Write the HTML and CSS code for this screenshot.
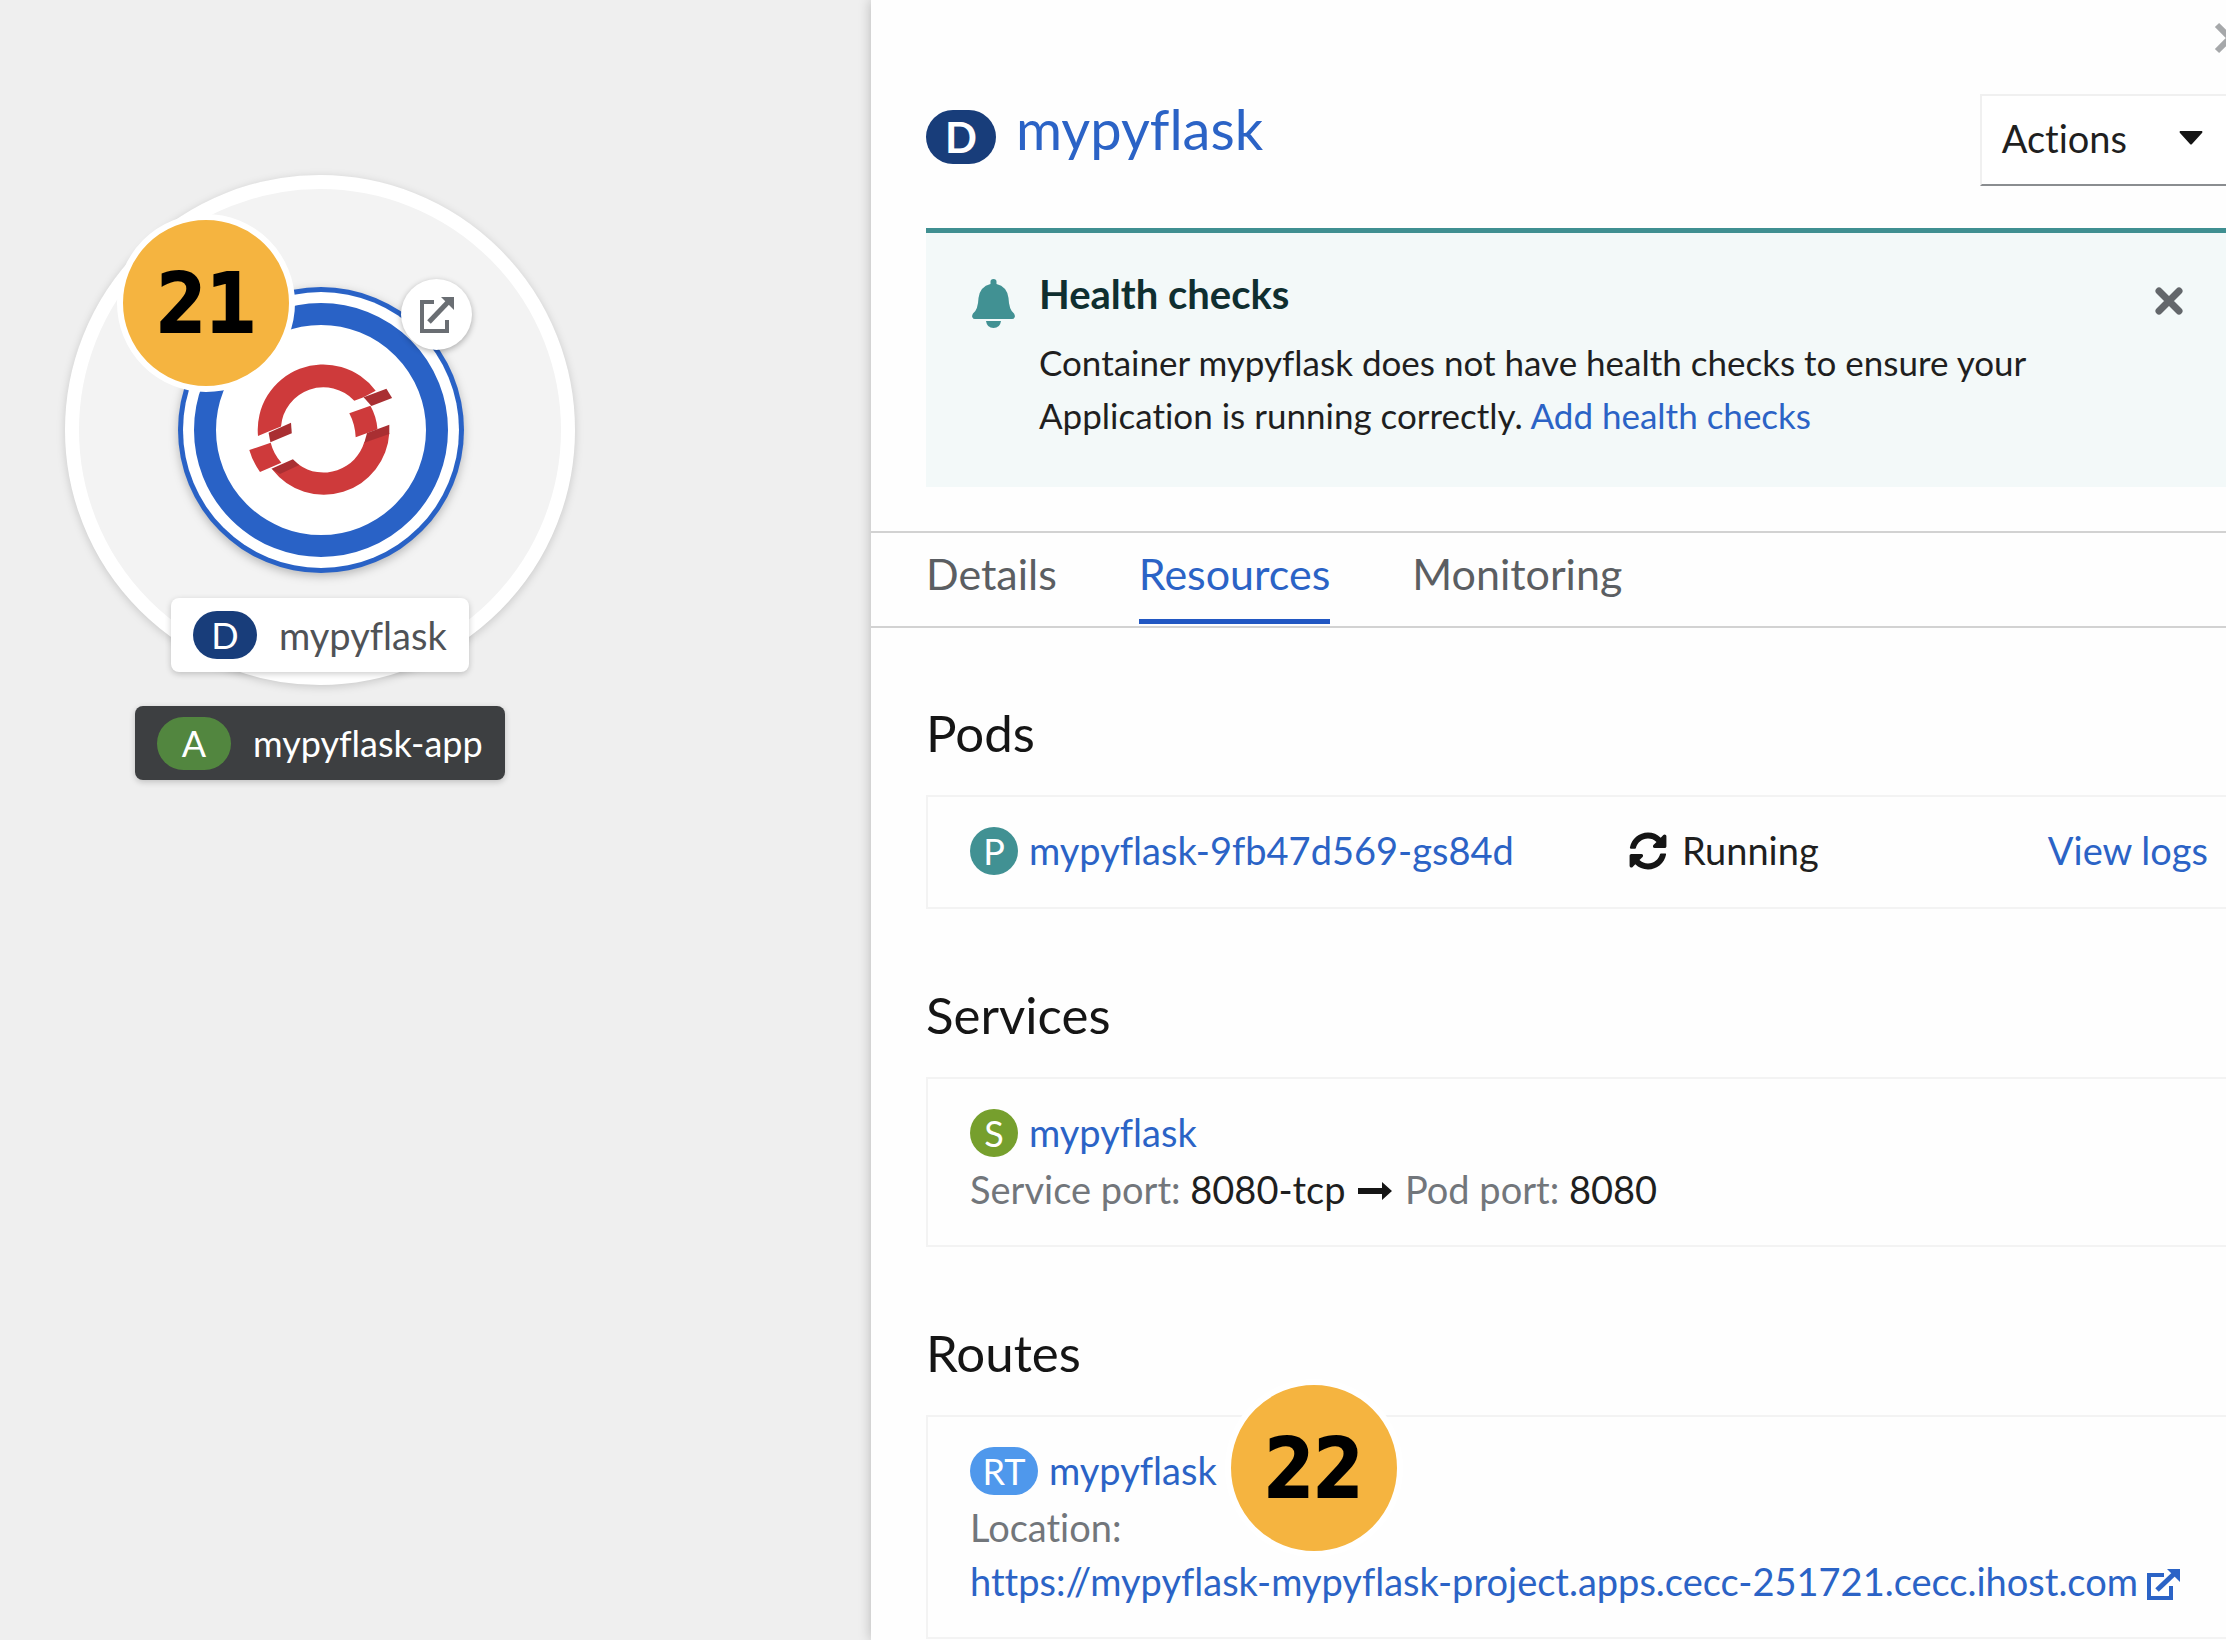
FILE: index.html
```html
<!DOCTYPE html>
<html lang="en">
<head>
<meta charset="utf-8">
<title>Topology - mypyflask</title>
<link rel="stylesheet" href="styles.css">
</head>
<body>
<main class="layout">
  <section class="canvas" aria-label="Topology">
    <svg class="graph" width="640" height="720" viewBox="0 0 640 720" aria-hidden="true">
      <circle class="group-ring" cx="320" cy="430" r="248"/>
      <g class="node">
        <circle cx="321" cy="430" r="143" fill="#2962c6"/>
        <circle cx="321" cy="430" r="138" fill="#fff"/>
      </g>
      <circle cx="321" cy="430" r="116" fill="#fff" stroke="#2962c6" stroke-width="22"/>
      <g fill="#ce3a3b">
        <path d="M258 436A65.500 65.500 0 0 1 375.700 390.700L363.600 397.300L354.300 400.700A42.500 42.500 0 0 0 281 426.500L268.600 431.500Z"/>
        <path d="M349.300 413.300L370.400 405.700Q376.500 416.500 377.500 429.300L355.700 437.300Q355 424 349.300 413.300Z"/>
        <path d="M389.300 433A65.500 65.500 0 0 1 272.100 469.300L298.600 464.500A42.500 42.500 0 0 0 364.300 442Z"/>
        <path d="M249.300 450L270.700 442.700Q273.500 454 281.400 462.700L260 472Q252.500 461.500 249.300 450Z"/>
      </g>
      <g fill="#a92f32">
        <path d="M268.600 432.700L291 422.700L291.800 433.300L270.400 442.300Z"/>
        <path d="M363.600 397.300L386.400 388.700L392.100 398L371.400 406Z"/>
        <path d="M367 433L389.300 424.700L389.300 434L364.300 442.700Z"/>
        <path d="M271.400 468.700L292.900 459.300L299.300 465L280 474Z"/>
      </g>
    </svg>
    <a class="open-url" href="#route" aria-label="Open URL">
      <svg width="36" height="38" viewBox="0 0 36 38"><path d="M15 6H3V35H28V24" fill="none" stroke="#6a6e73" stroke-width="4"/><path d="M10 26L31 4" stroke="#6a6e73" stroke-width="5"/><path d="M22 1H35V14Z" fill="#6a6e73"/></svg>
    </a>
    <div class="node-label"><span class="pill pill-d">D</span><span>mypyflask</span></div>
    <div class="node-label app-label"><span class="pill pill-a">A</span><span>mypyflask-app</span></div>
    <span class="step step-node">21</span>
  </section>

  <aside class="panel">
    <div class="panel-top">
      <button class="icon-button panel-close" type="button" aria-label="Close">
        <svg width="34" height="34" viewBox="0 0 34 34"><path d="M4 4L30 30M30 4L4 30" stroke="#a6a8aa" stroke-width="6"/></svg>
      </button>
    </div>
    <header class="panel-header">
      <h1 class="title"><span class="pill title-pill">D</span><a href="#deployment">mypyflask</a></h1>
      <button class="actions" type="button">Actions
        <svg width="24" height="14" viewBox="0 0 24 14"><path d="M1 0H23Q24 1 23 2L13 13Q12 14 11 13L1 2Q0 1 1 0Z" fill="#151515"/></svg>
      </button>
    </header>

    <div class="alert">
      <svg class="bell" width="43" height="49" viewBox="0 0 43 49"><path d="M18.500 5V2.500Q18.500 0 21.500 0T24.500 2.500V5Q35 7.500 36.500 19Q37 31 42 34.500Q43.500 37 42.500 38.500Q42 40 40 40H3Q1 40 .5 38.500Q-.5 37 1 34.500Q6 31 6.500 19Q8 7.500 18.500 5Z" fill="#419193"/><path d="M14 42H29Q28 49 21.500 49T14 42Z" fill="#419193"/></svg>
      <div class="alert-body">
        <h2 class="alert-title">Health checks</h2>
        <p class="alert-text">Container mypyflask does not have health checks to ensure your<br>Application is running correctly. <a href="#health">Add health checks</a></p>
      </div>
      <button class="icon-button" type="button" aria-label="Dismiss">
        <svg width="28" height="28" viewBox="0 0 28 28"><path d="M4 4L24 24M24 4L4 24" stroke="#63676b" stroke-width="7" stroke-linecap="round"/></svg>
      </button>
    </div>

    <nav class="tabs">
      <a class="tab" href="#details">Details</a>
      <a class="tab tab-current" href="#resources" aria-current="page">Resources</a>
      <a class="tab" href="#monitoring">Monitoring</a>
    </nav>

    <div class="resources">
      <section class="resource">
        <h2 class="heading">Pods</h2>
        <div class="card pod-grid">
          <div class="row"><span class="pill pill-p">P</span><a href="#pod">mypyflask-9fb47d569-gs84d</a></div>
          <div class="row row-spread">
            <span class="status"><svg width="38" height="38" viewBox="0 0 512 512"><path fill="#151515" d="M370.720 133.280C339.458 104.008 298.888 87.962 255.848 88c-77.458.068-144.328 53.178-162.791 126.850-1.344 5.363-6.122 9.150-11.651 9.150H24.103c-7.498 0-13.194-6.807-11.807-14.176C33.933 94.924 134.813 8 256 8c66.448 0 126.791 26.136 171.315 68.685L463.030 40.970C478.149 25.851 504 36.559 504 57.941V192c0 13.255-10.745 24-24 24H345.941c-21.382 0-32.090-25.851-16.971-40.971l41.750-41.749zM32 296h134.059c21.382 0 32.090 25.851 16.971 40.971l-41.750 41.750c31.262 29.273 71.835 45.319 114.876 45.280 77.418-.070 144.315-53.144 162.787-126.849 1.344-5.363 6.122-9.150 11.651-9.150h57.304c7.498 0 13.194 6.807 11.807 14.176C478.067 417.076 377.187 504 256 504c-66.448 0-126.791-26.136-171.315-68.685L48.970 471.030C33.851 486.149 8 475.441 8 454.059V320c0-13.255 10.745-24 24-24z"/></svg><span>Running</span></span>
            <a href="#logs">View logs</a>
          </div>
        </div>
      </section>

      <section class="resource">
        <h2 class="heading">Services</h2>
        <div class="card">
          <div class="row"><span class="pill pill-s">S</span><a href="#service">mypyflask</a></div>
          <p class="detail"><span class="muted">Service port:</span> 8080-tcp <svg class="arrow" width="34" height="18" viewBox="0 0 34 18"><path d="M0 6H24V0L34 9L24 18V12H0Z" fill="#151515"/></svg> <span class="muted">Pod port:</span> 8080</p>
        </div>
      </section>

      <section class="resource">
        <h2 class="heading">Routes</h2>
        <div class="card" id="route">
          <div class="row"><span class="pill pill-rt">RT</span><a href="#route">mypyflask</a></div>
          <p class="detail muted">Location:</p>
          <p class="detail"><a href="https://mypyflask-mypyflask-project.apps.cecc-251721.cecc.ihost.com">https://mypyflask-mypyflask-project.apps.cecc-251721.cecc.ihost.com<svg class="external" width="34" height="32" viewBox="0 0 34 32"><path d="M18 6H3V29H25V17" fill="none" stroke="#2b63c6" stroke-width="4"/><path d="M11 21L29 4" stroke="#2b63c6" stroke-width="5"/><path d="M21 0H34V13Z" fill="#2b63c6"/></svg></a></p>
          <span class="step step-route">22</span>
        </div>
      </section>
    </div>
  </aside>
</main>
</body>
</html>
```
FILE: styles.css
```css
* { box-sizing: border-box; }

body {
  margin: 0;
  font-family: Lato, "Open Sans", sans-serif;
  font-size: 38px;
  font-variant-ligatures: none;
  color: #1f1f1f;
  background: #fefefe;
}

h1, h2, p { margin: 0; font-weight: 400; }
a { color: #2b63c6; text-decoration: none; }
button { font: inherit; color: inherit; cursor: pointer; }
svg { display: block; flex: none; }

.layout {
  display: grid;
  grid-template-columns: minmax(0, 871fr) minmax(0, 1355fr);
  min-height: 100vh;
  overflow: hidden;
}

/* Topology canvas: nodes are placed freely */
.canvas { position: relative; background: #efefef; }
.graph { position: absolute; left: 0; top: 0; }
.group-ring {
  fill: #f3f3f3;
  stroke: #fff;
  stroke-width: 14;
  filter: drop-shadow(0 2px 4px rgba(0, 0, 0, .16));
}
.node { filter: drop-shadow(0 3px 5px rgba(0, 0, 0, .25)); }

.open-url {
  position: absolute;
  left: 401px;
  top: 279px;
  width: 71px;
  height: 71px;
  display: flex;
  align-items: center;
  justify-content: center;
  border-radius: 50%;
  background: #fff;
  box-shadow: 0 2px 6px rgba(0, 0, 0, .3);
}

.node-label {
  position: absolute;
  left: 171px;
  top: 598px;
  height: 74px;
  padding: 0 22px;
  display: flex;
  align-items: center;
  gap: 22px;
  border-radius: 8px;
  background: #fff;
  color: #4f5256;
  box-shadow: 0 2px 6px rgba(0, 0, 0, .2);
}
.app-label {
  left: 135px;
  top: 706px;
  font-size: 36px;
  background: #3d3f41;
  color: #fff;
}

.pill {
  flex: none;
  display: flex;
  align-items: center;
  justify-content: center;
  width: 48px;
  height: 48px;
  border-radius: 27px;
  color: #fff;
  font-size: 36px;
}
.pill-d { width: 64px; background: #183d7a; }
.pill-a { width: 74px; height: 53px; background: #52863f; }
.pill-p { background: #419193; }
.pill-s { background: #769f2d; }
.pill-rt { width: 68px; background: #4f98ec; }

.step {
  position: absolute;
  width: 178px;
  height: 178px;
  display: flex;
  align-items: center;
  justify-content: center;
  border: 6px solid #fff;
  border-radius: 50%;
  background: #f5b440;
  color: #000;
  font: 700 82px "DejaVu Sans Mono", monospace;
  -webkit-text-stroke: 2px #000;
}
.step-node { left: 117px; top: 214px; }
.step-route { left: 297px; top: -38px; }

/* Side panel */
.panel {
  position: relative;
  background: #fefefe;
  box-shadow: 0 0 12px rgba(0, 0, 0, .24);
}

.icon-button { padding: 0; border: 0; background: none; }

.panel-top { display: flex; justify-content: flex-end; height: 94px; padding-top: 21px; }
.panel-close { align-self: flex-start; margin-right: -21px; }

.panel-header {
  display: flex;
  justify-content: space-between;
  align-items: flex-start;
  padding-left: 55px;
}
.title {
  display: flex;
  align-items: flex-end;
  gap: 20px;
  font-size: 56px;
  line-height: 70px;
}
.title-pill { width: 70px; height: 54px; background: #183d7a; font-size: 42px; font-weight: 700; }

.actions {
  display: flex;
  align-items: center;
  gap: 52px;
  height: 92px;
  padding: 0 23px 4px 20px;
  border: 2px solid #f0f0f0;
  border-right: 0;
  border-bottom-color: #8a8d90;
  background: #fff;
}

.alert {
  display: flex;
  align-items: flex-start;
  margin: 42px 0 44px 55px;
  padding: 37px 43px 45px 46px;
  border-top: 5px solid #3f8f91;
  background: #f3f9f9;
}
.bell { margin-top: 9px; }
.alert-body { flex: 1; padding-left: 24px; }
.alert-text { font-size: 35px; line-height: 53px; }
.alert-title { margin-bottom: 18px; font-size: 40px; line-height: 48px; font-weight: 700; color: #0f2f30; }
.alert .icon-button { margin-top: 17px; }

.tabs {
  display: flex;
  gap: 82px;
  padding: 0 55px 2px;
  border-top: 2px solid #d2d2d2;
  border-bottom: 2px solid #d2d2d2;
  font-size: 43px;
  line-height: 82px;
}
.tab { padding-bottom: 4px; border-bottom: 5px solid transparent; color: #5b5e62; }
.tab-current { color: #2b63c6; border-bottom-color: #2157c3; }

.resources { display: grid; gap: 76px; padding: 75px 0 0 55px; }
.heading { margin-bottom: 32px; font-size: 51px; line-height: 60px; color: #151515; }

.card {
  position: relative;
  padding: 29px 18px 29px 42px;
  border: 2px solid #f3f3f3;
  border-right: 0;
}
.pod-grid { display: grid; grid-template-columns: 659fr 579fr; padding-bottom: 31px; }
.row { display: flex; align-items: center; gap: 11px; height: 50px; margin-bottom: 4px; }
.row > a, .status > span { padding-bottom: 3px; }
.row-spread { justify-content: space-between; }
.pod-grid .row { margin-bottom: 0; }
.status { display: flex; align-items: center; gap: 15px; }

.detail { line-height: 54px; white-space: nowrap; }
.muted { color: #72767b; }
.arrow, .external { display: inline-block; }
.external { margin-left: 8px; vertical-align: -5px; }
.arrow { margin: 0 3px; vertical-align: 4px; }
```
